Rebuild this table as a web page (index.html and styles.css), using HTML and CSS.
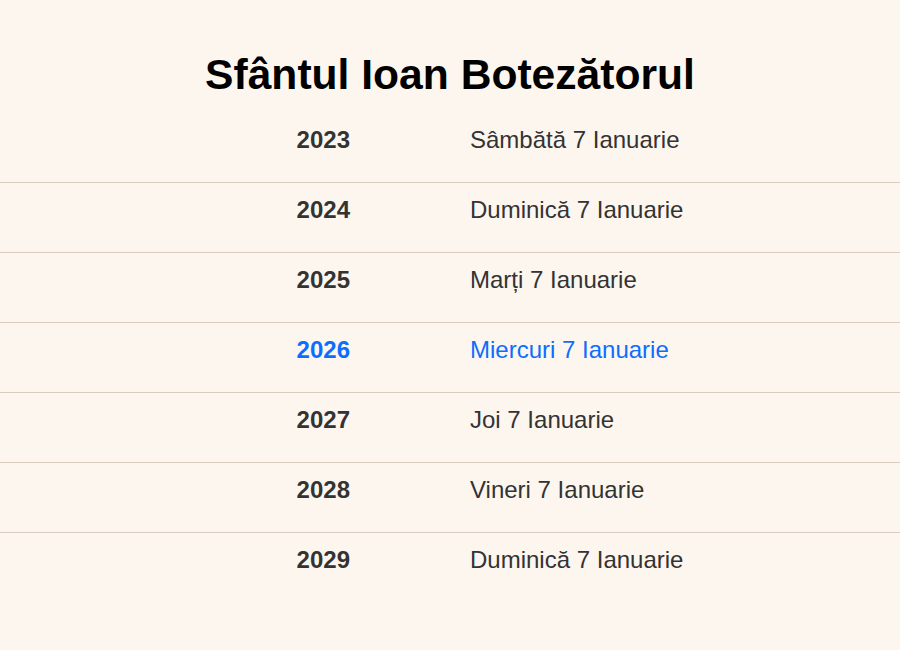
FILE: index.html
```html
<!DOCTYPE html>
<html lang="ro">
<head>
<meta charset="utf-8">
<title>Sfântul Ioan Botezătorul</title>
<link rel="stylesheet" href="styles.css">
</head>
<body>
<main class="page">
  <h1 class="title">Sfântul Ioan Botezătorul</h1>
  <div class="list">
    <div class="row"><span class="year">2023</span><span class="date">Sâmbătă 7 Ianuarie</span></div>
    <div class="row"><span class="year">2024</span><span class="date">Duminică 7 Ianuarie</span></div>
    <div class="row"><span class="year">2025</span><span class="date">Marți 7 Ianuarie</span></div>
    <div class="row current"><span class="year">2026</span><span class="date">Miercuri 7 Ianuarie</span></div>
    <div class="row"><span class="year">2027</span><span class="date">Joi 7 Ianuarie</span></div>
    <div class="row"><span class="year">2028</span><span class="date">Vineri 7 Ianuarie</span></div>
    <div class="row last"><span class="year">2029</span><span class="date">Duminică 7 Ianuarie</span></div>
  </div>
</main>
</body>
</html>
```
FILE: styles.css
```css
html, body {
  margin: 0;
  padding: 0;
  background: #fdf6ef;
}
body {
  font-family: "Liberation Sans", Arial, sans-serif;
  color: #333333;
}
.page {
  padding-top: 50px;
}
.title {
  margin: 0 0 15px;
  font-size: 42.6px;
  font-weight: 700;
  color: #000;
  text-align: center;
  line-height: 48px;
}
.list {
  display: flex;
  flex-direction: column;
}
.row {
  display: grid;
  grid-template-columns: 350px 1fr;
  column-gap: 120px;
  padding: 13px 0 28px;
  font-size: 24px;
  line-height: 28px;
  border-bottom: 1px solid #d8ccbf;
}
.row.last {
  border-bottom: none;
}
.year {
  text-align: right;
  font-weight: 700;
}
.current {
  color: #0d6efd;
}
```
